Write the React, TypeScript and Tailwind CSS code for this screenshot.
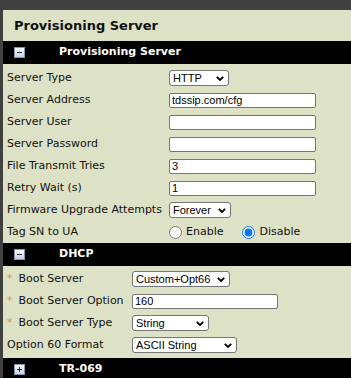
import type { ReactNode } from 'react'

const label = "font-['DejaVu_Sans',Verdana,sans-serif] text-[11px] text-[#111]"
const ctrl = "font-['Liberation_Sans',Arial,sans-serif] text-[11px] text-black"

function BarIcon({ open }: { open: boolean }) {
  return (
    <svg width="11" height="11" viewBox="0 0 11 11" aria-hidden="true">
      <defs>
        <linearGradient id={open ? 'gm' : 'gp'} x1="0" y1="0" x2="0" y2="1">
          <stop offset="0" stopColor="#ffffff" />
          <stop offset="1" stopColor="#c5cedd" />
        </linearGradient>
      </defs>
      <rect x="0.5" y="0.5" width="10" height="10" fill={`url(#${open ? 'gm' : 'gp'})`} stroke="#8796b3" />
      <rect x="3" y="5" width="5" height="1" fill="#1c2a44" />
      {!open && <rect x="5" y="3" width="1" height="5" fill="#1c2a44" />}
    </svg>
  )
}

function Bar({ title, open = true }: { title: string; open?: boolean }) {
  return (
    <div className="h-[23px] bg-black flex items-center">
      <div className="ml-[11px] flex">
        <BarIcon open={open} />
      </div>
      <span className="ml-[34px] font-['DejaVu_Sans',Verdana,sans-serif] text-[11px] font-bold text-white">
        {title}
      </span>
    </div>
  )
}

function Row({ name, req, col, children }: { name: string; req?: boolean; col: string; children: ReactNode }) {
  return (
    <div className="h-[22px] flex items-center">
      <div className={`${col} shrink-0 pl-[4px] pt-[1px] ${label} whitespace-nowrap`}>
        {req && <span className="text-[#f08c1a] mr-[6px]">*</span>}
        {name}
      </div>
      <div className="flex items-center">{children}</div>
    </div>
  )
}

function Select({ value, w, options }: { value: string; w: string; options?: string[] }) {
  return (
    <div className="relative flex">
      <select
        defaultValue={value}
        className={`${ctrl} ${w} h-[16px] appearance-none bg-white border border-[#767676] rounded-[3px] pl-[3px] pr-[14px] leading-[14px]`}
      >
        {(options ?? [value]).map((o) => (
          <option key={o}>{o}</option>
        ))}
      </select>
      <svg
        className="absolute right-[5px] top-[6px] pointer-events-none"
        width="8"
        height="5"
        viewBox="0 0 8 5"
        aria-hidden="true"
      >
        <path d="M0.8 0.8 L4 4 L7.2 0.8" fill="none" stroke="#000" strokeWidth="1.8" />
      </svg>
    </div>
  )
}

function Text({ value = '', w = 'w-[147px]' }: { value?: string; w?: string }) {
  return (
    <input
      type="text"
      defaultValue={value}
      className={`${ctrl} ${w} h-[15px] bg-white border border-[#767676] rounded-[2px] px-[2px]`}
    />
  )
}

export default function App() {
  return (
    <div className="w-[351px] h-[378px] overflow-hidden bg-[#404040] pt-[10px] pl-[3px]">
      <div className="w-[400px] bg-[#dde1c6] h-[400px]">
        <div className="h-[31px] flex items-center pl-[11px]">
          <h1 className="font-['DejaVu_Sans',Verdana,sans-serif] text-[13px] font-bold text-[#111]">
            Provisioning Server
          </h1>
        </div>

        <Bar title="Provisioning Server" />
        <div className="pt-[3px]">
          <Row name="Server Type" col="w-[166px]">
            <Select value="HTTP" w="w-[60px]" options={['TFTP', 'HTTP', 'HTTPS', 'FTP']} />
          </Row>
          <Row name="Server Address" col="w-[166px]">
            <Text value="tdssip.com/cfg" />
          </Row>
          <Row name="Server User" col="w-[166px]">
            <Text />
          </Row>
          <Row name="Server Password" col="w-[166px]">
            <Text />
          </Row>
          <Row name="File Transmit Tries" col="w-[166px]">
            <Text value="3" />
          </Row>
          <Row name="Retry Wait (s)" col="w-[166px]">
            <Text value="1" />
          </Row>
          <Row name="Firmware Upgrade Attempts" col="w-[166px]">
            <Select value="Forever" w="w-[62px]" />
          </Row>
          <Row name="Tag SN to UA" col="w-[166px]">
            <label className={`flex items-center ${label}`}>
              <input type="radio" name="tag" className="w-[13px] h-[13px] m-0" />
              <span className="ml-[4px]">Enable</span>
            </label>
            <label className={`flex items-center ml-[19px] ${label}`}>
              <input type="radio" name="tag" defaultChecked className="w-[13px] h-[13px] m-0 accent-[#0075ff]" />
              <span className="ml-[4px]">Disable</span>
            </label>
          </Row>
        </div>

        <Bar title="DHCP" />
        <div className="pt-[2px] pb-[2px]">
          <Row name="Boot Server" req col="w-[129px]">
            <Select value="Custom+Opt66" w="w-[98px]" options={['Custom', 'Custom+Opt66', 'Opt66']} />
          </Row>
          <Row name="Boot Server Option" req col="w-[129px]">
            <Text value="160" w="w-[146px]" />
          </Row>
          <Row name="Boot Server Type" req col="w-[129px]">
            <Select value="String" w="w-[77px]" options={['String', 'IP Address']} />
          </Row>
          <Row name="Option 60 Format" col="w-[129px]">
            <Select value="ASCII String" w="w-[105px]" options={['ASCII String', 'Binary']} />
          </Row>
        </div>

        <Bar title="TR-069" open={false} />
      </div>
    </div>
  )
}
